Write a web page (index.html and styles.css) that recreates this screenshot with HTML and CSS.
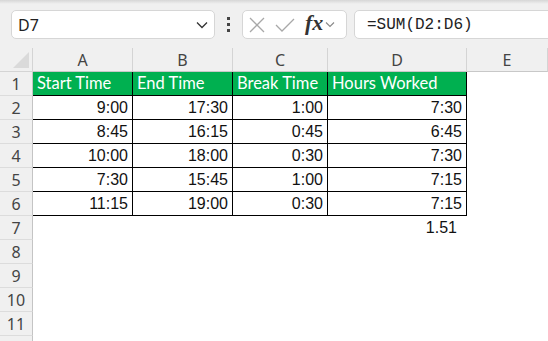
FILE: index.html
```html
<!DOCTYPE html>
<html lang="en">
<head>
  <meta charset="UTF-8">
  <title>Hours Worked</title>
  <link rel="stylesheet" href="styles.css">
</head>
<body>
  <div class="toolbar">
    <div class="namebox">
      <span>D7</span>
      <svg width="12" height="8" viewBox="0 0 12 8"><path d="M1 1.5 L6 6.5 L11 1.5" fill="none" stroke="#333" stroke-width="1.3"/></svg>
    </div>
    <div class="kebab"><i></i><i></i><i></i></div>
    <div class="fnbox">
      <svg width="18" height="18" viewBox="0 0 18 18"><path d="M2 2 L16 16 M16 2 L2 16" stroke="#a8a8a8" stroke-width="1.3"/></svg>
      <svg width="20" height="18" viewBox="0 0 20 18"><path d="M1 9 L7 15 L19 3" fill="none" stroke="#a8a8a8" stroke-width="1.3"/></svg>
      <span class="fx">fx</span>
      <svg width="10" height="7" viewBox="0 0 10 7"><path d="M1 1.5 L5 5.5 L9 1.5" fill="none" stroke="#888" stroke-width="1.1"/></svg>
    </div>
    <div class="formula">=SUM(D2:D6)</div>
  </div>

  <div class="sheet">
    <div class="corner"><span class="tri"></span></div>
    <div class="colhead">A</div>
    <div class="colhead">B</div>
    <div class="colhead">C</div>
    <div class="colhead">D</div>
    <div class="colhead">E</div>

    <div class="rowhead">1</div>
    <div class="cell hd">Start Time</div>
    <div class="cell hd">End Time</div>
    <div class="cell hd">Break Time</div>
    <div class="cell hd">Hours Worked</div>
    <div class="cell"></div>

    <div class="rowhead">2</div>
    <div class="cell tb">9:00</div>
    <div class="cell tb">17:30</div>
    <div class="cell tb">1:00</div>
    <div class="cell tb">7:30</div>
    <div class="cell"></div>

    <div class="rowhead">3</div>
    <div class="cell tb">8:45</div>
    <div class="cell tb">16:15</div>
    <div class="cell tb">0:45</div>
    <div class="cell tb">6:45</div>
    <div class="cell"></div>

    <div class="rowhead">4</div>
    <div class="cell tb">10:00</div>
    <div class="cell tb">18:00</div>
    <div class="cell tb">0:30</div>
    <div class="cell tb">7:30</div>
    <div class="cell"></div>

    <div class="rowhead">5</div>
    <div class="cell tb">7:30</div>
    <div class="cell tb">15:45</div>
    <div class="cell tb">1:00</div>
    <div class="cell tb">7:15</div>
    <div class="cell"></div>

    <div class="rowhead">6</div>
    <div class="cell tb">11:15</div>
    <div class="cell tb">19:00</div>
    <div class="cell tb">0:30</div>
    <div class="cell tb">7:15</div>
    <div class="cell"></div>

    <div class="rowhead">7</div>
    <div class="cell"></div>
    <div class="cell"></div>
    <div class="cell"></div>
    <div class="cell total">1.51</div>
    <div class="cell"></div>

    <div class="rowhead">8</div>
    <div class="cell wide"></div>
    <div class="rowhead">9</div>
    <div class="cell wide"></div>
    <div class="rowhead">10</div>
    <div class="cell wide"></div>
    <div class="rowhead">11</div>
    <div class="cell wide"></div>
    <div class="rowhead"></div>
    <div class="cell wide"></div>
  </div>
</body>
</html>
```

FILE: styles.css
```css
html, body {
  margin: 0;
  padding: 0;
  background-color: #f0f0f0;
  overflow: hidden;
}

.toolbar {
  display: flex;
  align-items: center;
  height: 48px;
  padding: 10px 0 9px 11px;
  box-sizing: border-box;
  background: linear-gradient(#d6d6d6, #f0f0f0 4px);
  font-family: "Noto Sans", sans-serif;
}

.namebox,
.fnbox,
.formula {
  height: 29px;
  box-sizing: border-box;
  background-color: white;
  border: 1px solid #d6d6d6;
  border-radius: 5px;
  display: flex;
  align-items: center;
}

.namebox {
  width: 204px;
  padding: 0 6px 0 6px;
  justify-content: space-between;
  font-size: 16px;
  color: #222;
}

.kebab {
  width: 27px;
  display: flex;
  flex-direction: column;
  align-items: center;
  gap: 3px;
}

.kebab i {
  width: 3px;
  height: 3px;
  background-color: #444;
}

.fnbox {
  width: 105px;
  padding: 0 4px 0 5px;
}

.fnbox svg:nth-child(2) {
  margin-left: 9px;
}

.fx {
  font-family: "Liberation Serif", serif;
  font-style: italic;
  font-weight: bold;
  font-size: 22px;
  color: #333;
  margin: -4px 2px 0 10px;
}

.formula {
  flex: 1;
  margin-left: 7px;
  margin-right: -8px;
  padding-left: 12px;
  font-family: "Liberation Mono", monospace;
  font-size: 16px;
  color: #222;
}

.sheet {
  display: grid;
  grid-template-columns: 33px 100px 100px 95px 139px 1fr;
  grid-auto-rows: 24px;
  background-color: white;
}

.corner,
.colhead,
.rowhead {
  background-color: #f0f0f0;
  font-family: "Noto Sans", sans-serif;
  font-size: 16px;
  color: #444;
  display: flex;
  align-items: center;
  justify-content: center;
  box-sizing: border-box;
}

.corner {
  border-right: 1px solid #d4d4d4;
  border-bottom: 1px solid #d4d4d4;
  align-items: flex-start;
  justify-content: flex-end;
  padding: 4px 3px 0 0;
}

.tri {
  width: 0;
  height: 0;
  border-left: 16px solid transparent;
  border-bottom: 16px solid #dadada;
}

.colhead {
  border-right: 1px solid #d4d4d4;
  border-bottom: 1px solid #c8c8c8;
}

.rowhead {
  border-right: 1px solid #c4c4c4;
  border-bottom: 1px solid #dcdcdc;
}

.cell {
  box-sizing: border-box;
  font-family: "Liberation Sans", Arial, sans-serif;
  font-size: 16px;
  color: #111;
  line-height: 23px;
  text-align: right;
  padding-right: 4px;
  white-space: nowrap;
}

.cell.hd {
  background-color: #00b050;
  color: white;
  font-family: Lato, sans-serif;
  font-size: 16.5px;
  text-align: left;
  padding-left: 4px;
  border-right: 1px solid #000;
  border-bottom: 1px solid #000;
}

.cell.tb {
  border-right: 1px solid #000;
  border-bottom: 1px solid #000;
}

.cell.total {
  padding-right: 10px;
}

.cell.wide {
  grid-column: 2 / -1;
}
```
